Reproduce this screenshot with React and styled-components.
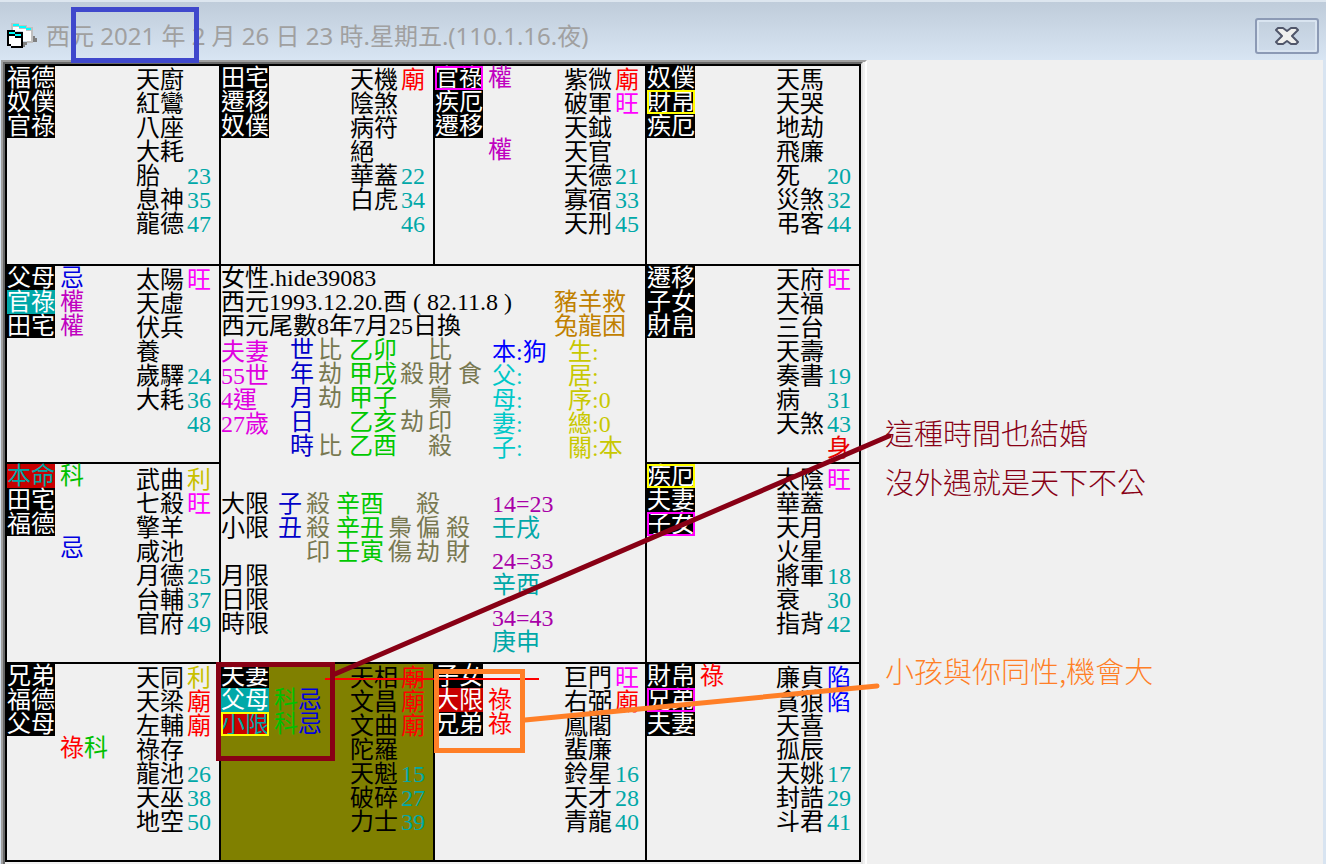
import React from "react";
import styled, { createGlobalStyle } from "styled-components";

const COLORS = {
  red: "#ff0000",
  magenta: "#ff00ff",
  violet: "#c000c0",
  pink: "#e000e0",
  purple: "#a800a8",
  blue: "#0000ff",
  navy: "#0000c8",
  green: "#00c800",
  teal: "#00a8a8",
  cyan: "#00c8c8",
  yellow: "#c8c800",
  gold: "#c08000",
  gray: "#787850",
};

const MARK_COLORS = {
  忌: "#0000e0",
  權: COLORS.violet,
  科: "#00c000",
  祿: COLORS.red,
  廟: COLORS.red,
  身: "#e80000",
  旺: COLORS.magenta,
  利: "#c8c000",
  陷: COLORS.blue,
};

const GlobalStyle = createGlobalStyle`
  * {
    box-sizing: border-box;
  }

  body {
    margin: 0;
    background-color: #f0f0f0;
  }
`;

const Window = styled.div`
  position: relative;
  min-height: 100vh;
  display: flex;
  flex-direction: column;
  overflow: hidden;
  background-color: #f0f0f0;
`;

const TitleBar = styled.header`
  height: 60px;
  display: flex;
  align-items: center;
  padding: 14px 7px 4px;
  border-top: 2px solid #dde6ef;
  background: linear-gradient(#bfccda, #d8e5f3);
`;

const Title = styled.h1`
  flex: 1;
  margin: 0 0 0 8px;
  color: #a0a0a0;
  font-family: "Noto Sans", "Noto Sans CJK TC", sans-serif;
  font-size: 24px;
  font-weight: 400;
  line-height: 32px;
  white-space: nowrap;
`;

const CloseButton = styled.button`
  width: 64px;
  height: 36px;
  display: flex;
  align-items: center;
  justify-content: center;
  padding: 0;
  border: 2px solid #8c9ab5;
  border-radius: 3px;
  background: linear-gradient(#c2cfdd, #cfdceb);
  box-shadow: inset 0 0 0 2px #d9e4f0;
`;

const Body = styled.main`
  flex: 1;
  display: flex;
  align-items: stretch;
  border-left: 1px solid #d8e4f1;
  border-right: 3px solid #d8e4f1;
`;

const BoardFrame = styled.div`
  flex: none;
  padding-right: 2px;
  border-top: 2px solid #a0a0a0;
  border-left: 2px solid #a0a0a0;
  border-right: 2px solid #ffffff;
`;

const BoardInner = styled.div`
  height: 100%;
  border-top: 2px solid #696969;
  border-left: 2px solid #696969;
  border-right: 2px solid #e3e3e3;
`;

const Board = styled.div`
  display: grid;
  grid-template-columns: 212px 212px 210px 212px;
  grid-template-rows: 198px 196px 198px 196px;
  gap: 2px;
  padding: 2px;
  background-color: #000000;
  color: #000000;
  font-family: "Liberation Serif", "Noto Sans CJK TC", serif;
  font-size: 24px;
  line-height: 24px;
  white-space: pre;
`;

const Cell = styled.section`
  display: grid;
  grid-template-columns: 48px 81px 51px 1fr;
  align-items: start;
  background-color: ${(props) => (props.$active ? "#808000" : "#f0f0f0")};
`;

const Tag = styled.div`
  height: 24px;
  color: ${(props) => props.$color || "#ffffff"};
  background-color: ${(props) => props.$bg || "#000000"};
  ${(props) =>
    props.$outline &&
    `outline: 2px solid ${props.$outline}; outline-offset: -2px;`}
`;

const Marks = styled.div`
  padding-left: 5px;
`;

const Stars = styled.div`
  padding-top: ${(props) => (props.$low ? 4 : 2)}px;
`;

const Line = styled.div`
  height: 24px;
  color: ${(props) => props.$color || "inherit"};
`;

const Mark = styled.span`
  color: ${(props) => props.$color};
`;

const Center = styled.section`
  grid-area: 2 / 2 / 4 / 4;
  display: flex;
  flex-direction: column;
  background-color: #f0f0f0;
`;

const Profile = styled.div`
  display: flex;
  justify-content: space-between;
  padding-right: 19px;
`;

const Verse = styled.div`
  padding-top: 24px;
  color: ${COLORS.gold};
`;

const Pillars = styled.div`
  display: grid;
  grid-template-columns: 69px 28px 31px 51px 28px 30px 34px 76px 1fr;
`;

const Limits = styled.div`
  display: grid;
  grid-template-columns: 57px 28px 30px 52px 28px 30px 46px 1fr;
  padding-top: 32px;
`;

const Column = styled.div`
  color: ${(props) => props.$color || "inherit"};
`;

const LowColumn = styled(Column)`
  padding-top: 2px;
`;

const Period = styled.div`
  margin-bottom: 9px;
`;

const Notes = styled.aside`
  flex: 1;
  display: flex;
  flex-direction: column;
  gap: 140px;
  padding: 348px 0 0 18px;
  font-family: "Noto Sans CJK TC", sans-serif;
  font-size: 29px;
  font-weight: 300;
  line-height: 49px;
`;

const Note = styled.p`
  margin: 0;
  color: ${(props) => props.$color};
`;

const Annotations = styled.svg`
  position: absolute;
  top: 0;
  left: 0;
  pointer-events: none;
`;

const PALACES = [
  {
    tags: ["福德", "奴僕", "官祿"],
    stars: ["天廚", "紅鸞", "八座", "大耗", "胎", "息神", "龍德"],
    side: ["", "", "", "", "23", "35", "47"],
  },
  {
    tags: ["田宅", "遷移", "奴僕"],
    stars: ["天機", "陰煞", "病符", "絕", "華蓋", "白虎"],
    side: ["廟", "", "", "", "22", "34", "46"],
  },
  {
    tags: [{ text: "官祿", outline: "#ff00ff" }, "疾厄", "遷移"],
    marks: ["權", "", "", "權"],
    stars: ["紫微", "破軍", "天鉞", "天官", "天德", "寡宿", "天刑"],
    side: ["廟", "旺", "", "", "21", "33", "45"],
  },
  {
    tags: ["奴僕", { text: "財帛", outline: "#ffff00" }, "疾厄"],
    stars: ["天馬", "天哭", "地劫", "飛廉", "死", "災煞", "弔客"],
    side: ["", "", "", "", "20", "32", "44"],
  },
  {
    tags: ["父母", { text: "官祿", bg: "#00a8a8" }, "田宅"],
    marks: ["忌", "權", "權"],
    stars: ["太陽", "天虛", "伏兵", "養", "歲驛", "大耗"],
    side: ["旺", "", "", "", "24", "36", "48"],
  },
  {
    tags: ["遷移", "子女", "財帛"],
    stars: ["天府", "天福", "三台", "天壽", "奏書", "病", "天煞"],
    side: ["旺", "", "", "", "19", "31", "43", "身"],
  },
  {
    low: true,
    tags: [{ text: "本命", bg: "#c80000", color: "#00a8a8" }, "田宅", "福德"],
    marks: ["科", "", "", "忌"],
    stars: ["武曲", "七殺", "擎羊", "咸池", "月德", "台輔", "官府"],
    side: ["利", "旺", "", "", "25", "37", "49"],
  },
  {
    low: true,
    tags: [
      { text: "疾厄", outline: "#ffff00" },
      "夫妻",
      { text: "子女", outline: "#ff00ff" },
    ],
    stars: ["太陰", "華蓋", "天月", "火星", "將軍", "衰", "指背"],
    side: ["旺", "", "", "", "18", "30", "42"],
  },
  {
    tags: ["兄弟", "福德", "父母"],
    marks: ["", "", "", "祿科"],
    stars: ["天同", "天梁", "左輔", "祿存", "龍池", "天巫", "地空"],
    side: ["利", "廟", "廟", "", "26", "38", "50"],
  },
  {
    active: true,
    tags: [
      "夫妻",
      { text: "父母", bg: "#00a8a8" },
      { text: "小限", bg: "#c80000", color: "#00a8a8", outline: "#ffff00" },
    ],
    marks: ["", "科忌", "科忌"],
    stars: ["天相", "文昌", "文曲", "陀羅", "天魁", "破碎", "力士"],
    side: ["廟", "廟", "廟", "", "15", "27", "39"],
  },
  {
    tags: ["子女", { text: "大限", bg: "#c80000" }, "兄弟"],
    marks: ["", "祿", "祿"],
    stars: ["巨門", "右弼", "鳳閣", "蜚廉", "鈴星", "天才", "青龍"],
    side: ["旺", "廟", "", "", "16", "28", "40"],
  },
  {
    tags: ["財帛", { text: "兄弟", outline: "#ff00ff" }, "夫妻"],
    marks: ["祿"],
    stars: ["廉貞", "貪狼", "天喜", "孤辰", "天姚", "封誥", "斗君"],
    side: ["陷", "陷", "", "", "17", "29", "41"],
  },
];

const PERIODS = [
  ["14=23", "壬戌"],
  ["24=33", "辛酉"],
  ["34=43", "庚申"],
];

const renderLines = (lines) =>
  lines.map((line, index) => <Line key={index}>{line}</Line>);

const renderMarks = (lines) =>
  lines.map((line, index) => (
    <Line key={index} $color={COLORS.teal}>
      {[...line].map((char, i) => (
        <Mark key={i} $color={MARK_COLORS[char] || COLORS.teal}>
          {char}
        </Mark>
      ))}
    </Line>
  ));

const Palace = ({ palace }) => (
  <Cell $active={palace.active}>
    <div>
      {palace.tags.map((item, index) => {
        const tag = typeof item === "string" ? { text: item } : item;
        return (
          <Tag
            key={index}
            $bg={tag.bg}
            $color={tag.color}
            $outline={tag.outline}
          >
            {tag.text}
          </Tag>
        );
      })}
    </div>
    <Marks>{renderMarks(palace.marks || [])}</Marks>
    <Stars $low={palace.low}>{renderLines(palace.stars)}</Stars>
    <Stars $low={palace.low}>{renderMarks(palace.side)}</Stars>
  </Cell>
);

const CenterPanel = () => (
  <Center>
    <Profile>
      <div>
        <Line>女性.hide39083</Line>
        <Line>西元1993.12.20.酉 ( 82.11.8 )</Line>
        <Line>西元尾數8年7月25日換</Line>
      </div>
      <Verse>{renderLines(["豬羊救", "兔龍困"])}</Verse>
    </Profile>
    <Pillars>
      <LowColumn $color={COLORS.pink}>
        {renderLines(["夫妻", "55世", "4運", "27歲"])}
      </LowColumn>
      <Column $color={COLORS.navy}>
        {renderLines(["世", "年", "月", "日", "時"])}
      </Column>
      <Column $color={COLORS.gray}>
        {renderLines(["比", "劫", "劫", "", "比"])}
      </Column>
      <Column $color={COLORS.green}>
        {renderLines(["乙卯", "甲戌", "甲子", "乙亥", "乙酉"])}
      </Column>
      <Column $color={COLORS.gray}>
        {renderLines(["", "殺", "", "劫"])}
      </Column>
      <Column $color={COLORS.gray}>
        {renderLines(["比", "財", "梟", "印", "殺"])}
      </Column>
      <Column $color={COLORS.gray}>{renderLines(["", "食"])}</Column>
      <LowColumn $color={COLORS.cyan}>
        <Line $color={COLORS.blue}>本:狗</Line>
        {renderLines(["父:", "母:", "妻:", "子:"])}
      </LowColumn>
      <LowColumn $color={COLORS.yellow}>
        {renderLines(["生:", "居:", "序:0", "總:0", "關:本"])}
      </LowColumn>
    </Pillars>
    <Limits>
      <Column>
        {renderLines(["大限", "小限", "", "月限", "日限", "時限"])}
      </Column>
      <Column $color={COLORS.navy}>{renderLines(["子", "丑"])}</Column>
      <Column $color={COLORS.gray}>{renderLines(["殺", "殺", "印"])}</Column>
      <Column $color={COLORS.green}>
        {renderLines(["辛酉", "辛丑", "壬寅"])}
      </Column>
      <Column $color={COLORS.gray}>{renderLines(["", "梟", "傷"])}</Column>
      <Column $color={COLORS.gray}>{renderLines(["殺", "偏", "劫"])}</Column>
      <Column $color={COLORS.gray}>{renderLines(["", "殺", "財"])}</Column>
      <Column>
        {PERIODS.map(([years, stem]) => (
          <Period key={years}>
            <Line $color={COLORS.purple}>{years}</Line>
            <Line $color={COLORS.teal}>{stem}</Line>
          </Period>
        ))}
      </Column>
    </Limits>
  </Center>
);

const FormIcon = () => (
  <svg width="31" height="28" viewBox="0 0 31 28" shapeRendering="crispEdges">
    <path d="M26 14h2v2h2v4h-4z" fill="#808080" />
    <path d="M16 20h4v3h-2v2h-2z" fill="#808080" />
    <path d="M4 1h8v2h8v2h6v16h-6v-2h-4V9H4z" fill="#c0c0c0" />
    <path d="M6 5h6v2h7v2h5v10h-8V9H6z" fill="#ffffff" />
    <path d="M6 2h6v2h7v2h5v2h-5V6h-7V4H6z" fill="#00ffff" />
    <path d="M0 8h8v2h8v16H4v-2H0z" fill="#000000" />
    <path d="M2 14h12v10H4v-2H2z" fill="#ffffff" />
    <path d="M2 10h6v2h6v2H8v-2H2z" fill="#00ffff" />
    <path d="M8 14h6v2H8z" fill="#000000" />
  </svg>
);

const CloseIcon = () => (
  <svg width="24" height="18" viewBox="0 0 24 18">
    <path
      d="M3 1h5l4 3 4-3h5l2 2-6 6 6 6-2 2h-5l-4-3-4 3H3l-2-2 6-6-6-6z"
      fill="#f0f0ee"
      stroke="#50566a"
      strokeWidth="2"
      strokeLinejoin="round"
    />
  </svg>
);

export default function App() {
  return (
    <Window>
      <GlobalStyle />
      <TitleBar>
        <FormIcon />
        <Title>西元 2021 年 2 月 26 日 23 時.星期五.(110.1.16.夜)</Title>
        <CloseButton type="button" aria-label="關閉">
          <CloseIcon />
        </CloseButton>
      </TitleBar>
      <Body>
        <BoardFrame>
          <BoardInner>
            <Board>
              {PALACES.slice(0, 5).map((palace, index) => (
                <Palace key={index} palace={palace} />
              ))}
              <CenterPanel />
              {PALACES.slice(5).map((palace, index) => (
                <Palace key={index} palace={palace} />
              ))}
            </Board>
          </BoardInner>
        </BoardFrame>
        <Notes>
          <Note $color="#880015">
            這種時間也結婚
            <br />
            沒外遇就是天下不公
          </Note>
          <Note $color="#ff7f27">小孩與你同性,機會大</Note>
        </Notes>
      </Body>
      <Annotations width="900" height="864" fill="none" strokeWidth="5">
        <path d="M325 679h214" stroke="#ff0000" strokeWidth="2" />
        <rect x="73.5" y="9.5" width="123" height="51" stroke="#3f48cc" />
        <rect x="218.5" y="664.5" width="114" height="94" stroke="#880015" />
        <path d="M335 674L889 436" stroke="#880015" strokeLinecap="round" />
        <rect x="436.5" y="671.5" width="86" height="79" stroke="#ff7f27" />
        <path d="M525 720L877 686" stroke="#ff7f27" strokeLinecap="round" />
      </Annotations>
    </Window>
  );
}
